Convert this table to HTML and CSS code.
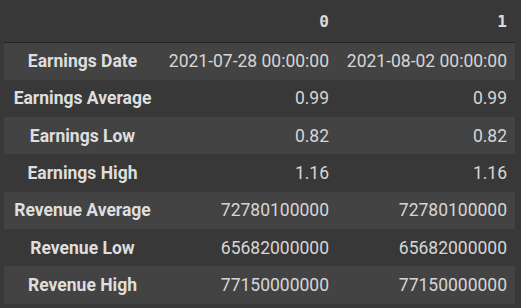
FILE: index.html
```html
<!DOCTYPE html>
<html>
<head>
<meta charset="utf-8">
<link rel="stylesheet" href="styles.css">
</head>
<body>
<table class="df">
  <colgroup>
    <col class="c0"><col class="c1"><col class="c2">
  </colgroup>
  <thead>
    <tr class="head"><th></th><th class="colname">0</th><th class="colname">1</th></tr>
  </thead>
  <tbody>
    <tr><th>Earnings Date</th><td>2021-07-28 00:00:00</td><td>2021-08-02 00:00:00</td></tr>
    <tr><th>Earnings Average</th><td>0.99</td><td>0.99</td></tr>
    <tr><th>Earnings Low</th><td>0.82</td><td>0.82</td></tr>
    <tr><th>Earnings High</th><td>1.16</td><td>1.16</td></tr>
    <tr><th>Revenue Average</th><td>72780100000</td><td>72780100000</td></tr>
    <tr><th>Revenue Low</th><td>65682000000</td><td>65682000000</td></tr>
    <tr><th>Revenue High</th><td>77150000000</td><td>77150000000</td></tr>
  </tbody>
</table>
</body>
</html>
```
FILE: styles.css
```css
html, body {
  margin: 0;
  padding: 0;
  background: #383838;
}
body {
  padding: 0 4px;
  font-family: Roboto, "Liberation Sans", sans-serif;
  font-size: 17.5px;
  color: #d6d6d6;
}
.df {
  border-collapse: collapse;
  table-layout: fixed;
  width: 511px;
}
.c0 { width: 157px; }
.c1 { width: 176px; }
.c2 { width: 178px; }
.head th {
  height: 42px;
  border-bottom: 1px solid #232323;
  padding: 0 8px 0 0;
}
.colname {
  font-family: "DejaVu Sans Mono", "Liberation Mono", monospace;
  font-size: 16px;
  font-weight: bold;
  text-align: right;
  color: #dcdcdc;
  vertical-align: middle;
  padding-top: 6px;
}
tbody tr { height: 37.3px; }
tbody tr:nth-child(odd) { background: #434343; }
tbody th {
  font-weight: bold;
  text-align: center;
  padding: 0;
  color: #dedede;
  white-space: nowrap;
}
tbody td {
  text-align: right;
  padding: 0 8px 0 0;
  white-space: nowrap;
}
```
